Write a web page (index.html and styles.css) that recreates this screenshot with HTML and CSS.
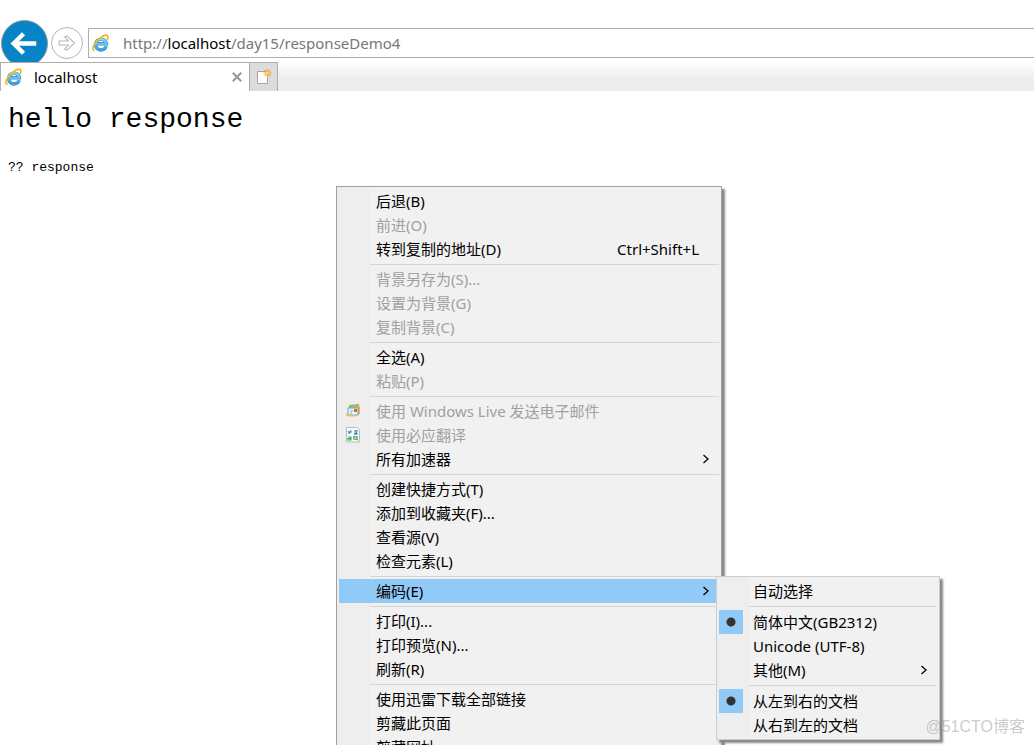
FILE: index.html
```html
<!DOCTYPE html>
<html lang="zh-CN">
<head>
<meta charset="utf-8">
<title>localhost</title>
<link rel="stylesheet" href="styles.css">
</head>
<body>
<svg class="defs" aria-hidden="true">
  <defs>
    <linearGradient id="blue" x1="0" y1="0" x2="0" y2="1"><stop offset="0" stop-color="#8fd8f8"/><stop offset="1" stop-color="#3a9fdc"/></linearGradient>
    <symbol id="ie" viewBox="0 0 18 18">
      <path d="M14.200 12.200A5.400 5.400 0 1 1 14.400 9.800H5" fill="none" stroke="#2f88c8" stroke-width="3.400"/>
      <path d="M14.200 12.200A5.400 5.400 0 1 1 14.400 9.800H5" fill="none" stroke="url(#blue)" stroke-width="2.200"/>
      <path d="M2.500 16.800C-.8 15 1.800 9.200 7 4.800C11.300 1.200 15.300 0 15.900 2.600C16.100 3.600 15.800 4.800 15.100 6" fill="none" stroke="#f5b81c" stroke-width="1.700"/>
    </symbol>
    <symbol id="chevron" viewBox="0 0 8 10"><path d="M1.500 1L6 5L1.500 9" fill="none" stroke="currentColor" stroke-width="1.300"/></symbol>
  </defs>
</svg>
<header>
  <nav class="toolbar">
    <button class="back" aria-label="后退"><svg viewBox="0 0 46 46"><path d="M35 23H13M22 13L12 23L22 33" fill="none" stroke="#fff" stroke-width="4.600"/></svg></button>
    <button class="forward" aria-label="前进"><svg viewBox="0 0 32 32"><path d="M7.500 13.800H17.500L13.500 9.500L16 8.500L24 16L16 23.500L13.500 22.500L17.500 18.200H7.500Z" fill="none" stroke="#b5b5b5" stroke-width="1.100"/></svg></button>
    <div class="address">
      <svg class="ie"><use href="#ie"/></svg>
      <div class="url" role="textbox" contenteditable="true" spellcheck="false" aria-label="地址">http://<span class="host">localhost</span>/day15/responseDemo4</div>
    </div>
  </nav>
  <div class="tabs">
    <div class="tab">
      <svg class="ie"><use href="#ie"/></svg>
      <span class="tab-title">localhost</span>
      <button class="close" aria-label="关闭选项卡"><svg viewBox="0 0 10 10"><path d="M.8.8L9.200 9.200M9.200.8L.8 9.200" stroke="#999" stroke-width="2"/></svg></button>
    </div>
    <button class="new-tab" aria-label="新建选项卡"><svg viewBox="0 0 16 16"><path d="M1.500 2.500H11.500V14.500H1.500Z" fill="#fdfdfd" stroke="#a5a5a5"/><path d="M11.500 0V8M7.500 4H15.500M8.700 1.200L14.300 6.800M14.300 1.200L8.700 6.800" stroke="#efa020" stroke-width="1.100"/><circle cx="11.500" cy="4" r="1.800" fill="#ffd460"/></svg></button>
  </div>
</header>
<main>
  <h1>hello response</h1>
  <p>?? response</p>
</main>

<div class="menu context" role="menu">
  <button class="item">后退(B)</button>
  <button class="item" disabled>前进(O)</button>
  <button class="item">转到复制的地址(D)<span class="shortcut">Ctrl+Shift+L</span></button>
  <hr>
  <button class="item" disabled>背景另存为(S)...</button>
  <button class="item" disabled>设置为背景(G)</button>
  <button class="item" disabled>复制背景(C)</button>
  <hr>
  <button class="item">全选(A)</button>
  <button class="item" disabled>粘贴(P)</button>
  <hr>
  <button class="item" disabled><svg class="glyph" viewBox="0 0 16 16"><path d="M4 2L14 1V9L4 10Z" fill="#8fbd68"/><path d="M3 4L15 3V11L3 12Z" fill="#e8b558"/><path d="M3 5H13V12H3Z" fill="#eef7fd" stroke="#5aa4d6"/><path d="M5 8H8M5 10H7" stroke="#78aeda"/><path d="M9 6H12V9H9Z" fill="#d9652f"/><path d="M1 11C1 14 4 14 13 13L14 12C8 13 4 13 3 10Z" fill="#f3bd4c"/></svg>使用 Windows Live 发送电子邮件</button>
  <button class="item" disabled><svg class="glyph" viewBox="0 0 16 16"><path d="M1.500.5H12L14.500 3V15H1.500Z" fill="#fcfcfc" stroke="#b5bdc0"/><path d="M3 4L5 7M6 3L4 7M3 5H7M9 4H13M11 3V8M9 6L13 7M12 5L9 8" stroke="#3389bd" stroke-width="1"/><path d="M3 10H6V13H3V11.500H6M9 9V13M8 10H12M12 9V13M10 12L13 13" fill="none" stroke="#35a160" stroke-width="1.100"/></svg>使用必应翻译</button>
  <button class="item" aria-haspopup="menu">所有加速器<svg class="chevron"><use href="#chevron"/></svg></button>
  <hr>
  <button class="item">创建快捷方式(T)</button>
  <button class="item">添加到收藏夹(F)...</button>
  <button class="item">查看源(V)</button>
  <button class="item">检查元素(L)</button>
  <hr>
  <button class="item active" aria-haspopup="menu" aria-expanded="true">编码(E)<svg class="chevron"><use href="#chevron"/></svg></button>
  <hr>
  <button class="item">打印(I)...</button>
  <button class="item">打印预览(N)...</button>
  <button class="item">刷新(R)</button>
  <hr>
  <button class="item">使用迅雷下载全部链接</button>
  <button class="item">剪藏此页面</button>
  <button class="item">剪藏网址</button>
</div>

<div class="menu submenu" role="menu">
  <button class="item">自动选择</button>
  <hr>
  <label class="item"><input type="radio" name="encoding" checked>简体中文(GB2312)</label>
  <label class="item"><input type="radio" name="encoding">Unicode (UTF-8)</label>
  <button class="item" aria-haspopup="menu">其他(M)<svg class="chevron"><use href="#chevron"/></svg></button>
  <hr>
  <label class="item"><input type="radio" name="direction" checked>从左到右的文档</label>
  <label class="item"><input type="radio" name="direction">从右到左的文档</label>
</div>
<div class="watermark">@51CTO博客</div>
</body>
</html>
```
FILE: styles.css
```css
* { box-sizing: border-box; }
html { height: 100%; overflow: hidden; }
body {
  position: relative;
  height: 100%;
  margin: 0;
  overflow: hidden;
  background: #fff;
  color: #000;
  font: 15px/24px "Noto Sans", "Noto Sans CJK SC", sans-serif;
}
button {
  margin: 0;
  padding: 0;
  border: 0;
  background: none;
  color: inherit;
  font: inherit;
}
.defs { position: absolute; width: 0; height: 0; }
.toolbar {
  display: flex;
  align-items: flex-start;
  height: 62px;
  padding-top: 20px;
  padding-left: 1px;
  overflow: hidden;
}
.back {
  flex: none;
  width: 47px;
  height: 47px;
  border: 1px solid #8b979e;
  border-radius: 50%;
  background: #0784c6;
}
.back svg, .forward svg { display: block; width: 100%; height: 100%; }
.forward {
  flex: none;
  width: 32px;
  height: 32px;
  margin: 7px 5px 0 3px;
  border: 1px solid #b5b5b5;
  border-radius: 50%;
}
.address {
  display: flex;
  flex: 1;
  align-items: center;
  height: 30px;
  margin-top: 8px;
  padding-left: 3px;
  border: 1px solid #aeaeae;
  border-right: 0;
}
.ie { flex: none; width: 18px; height: 18px; }
.url {
  flex: 1;
  margin-left: 13px;
  color: #777;
  outline: 0;
  white-space: nowrap;
}
.host { color: #000; }
.tabs {
  display: flex;
  height: 29px;
  background: linear-gradient(#fff, #ededed 60%, #ececec);
}
.tab {
  display: flex;
  align-items: center;
  width: 250px;
  padding: 0 7px 0 4px;
  border: 1px solid #aeaeae;
  border-width: 1px 1px 0;
  background: #fff;
}
.tab-title { flex: 1; margin-left: 11px; }
.close { width: 10px; height: 10px; }
.close svg { display: block; }
.new-tab {
  display: flex;
  align-items: center;
  justify-content: center;
  width: 28px;
  border: 1px solid #aeaeae;
  border-width: 1px 1px 0 0;
  background: #dcdcdc;
}
.new-tab svg { width: 16px; height: 16px; }
main { padding: 11px 8px; font-family: "Liberation Mono", monospace; }
h1 { margin: 0; font-size: 28px; font-weight: 400; line-height: 36px; }
p { margin: 18px 0 0; font-size: 13px; line-height: 24px; }
.menu {
  position: absolute;
  padding: 2px;
  border: 1px solid #a0a0a0;
  background: linear-gradient(90deg, #eee 33px, #f1f1f1 33px);
  box-shadow: 3px 3px 2px #888;
}
.context { left: 336px; top: 186px; width: 386px; }
.submenu { left: 716px; top: 576px; width: 224px; border-color: #ccc; }
.item {
  display: flex;
  align-items: center;
  width: 100%;
  height: 24px;
  padding: 0 9px 0 37px;
  text-align: left;
  white-space: nowrap;
}
.submenu .item { padding-left: 34px; }
.item:disabled { color: #a0a0a0; }
.item.active { background: #91c9f7; }
.shortcut { margin-left: auto; padding-right: 11px; }
.chevron { width: 8px; height: 10px; margin-left: auto; }
.glyph { width: 16px; height: 16px; margin: 0 15px 0 -31px; }
.menu hr {
  height: 1px;
  margin: 3px 0 2px 31px;
  border: 0;
  background: #d5d5d5;
}
.submenu hr { margin-bottom: 3px; margin-left: 30px; }
.item input {
  flex: none;
  appearance: none;
  width: 24px;
  height: 24px;
  margin: 0 10px 0 -34px;
}
.item input:checked { background: radial-gradient(circle, #333 4px, #91c9f7 5px); }
.watermark {
  position: absolute;
  right: 9px;
  bottom: 6px;
  color: rgba(120, 120, 120, .4);
  font: 16px/24px "Liberation Sans", "Noto Sans CJK SC", sans-serif;
}
```
